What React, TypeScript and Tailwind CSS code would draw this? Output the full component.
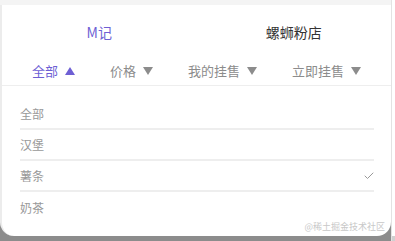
import { Check } from "lucide-react";

const filters = [
  { label: "全部", active: true },
  { label: "价格", active: false },
  { label: "我的挂售", active: false },
  { label: "立即挂售", active: false },
];

const options = [
  { label: "全部", checked: false },
  { label: "汉堡", checked: false },
  { label: "薯条", checked: true },
  { label: "奶茶", checked: false },
];

function Caret({ up, active }: { up: boolean; active: boolean }) {
  return (
    <svg width="10" height="8" viewBox="0 0 10 8" className="ml-[7px]">
      <polygon
        points={up ? "5,0 10,8 0,8" : "0,0 10,0 5,8"}
        fill={active ? "#6e5fd4" : "#8c8c8c"}
      />
    </svg>
  );
}

export default function App() {
  return (
    <div
      className="w-[395px] h-[241px] flex bg-white overflow-hidden"
      style={{ fontFamily: '"Noto Sans CJK SC", "Noto Sans", sans-serif' }}
    >
      <div className="w-[392px] h-full flex flex-col bg-[#8c8c8c] border-r border-[#e3e3e3]">
        <div className="h-[5px] bg-[#f4f4f4] shrink-0" />
        <div className="h-[231px] bg-white border-l-2 border-[#ececec] rounded-b-[14px] flex flex-col relative">
          <div className="flex h-[52px] items-center pt-[2px]">
            <div className="flex-1 text-center text-[14px] text-[#6e5fd4]">M记</div>
            <div className="flex-1 text-center text-[14px] text-[#333]">螺蛳粉店</div>
          </div>
          <div className="flex h-[29px] items-center justify-between px-[30px] border-b border-[#eeeeee]">
            {filters.map((f) => (
              <div key={f.label} className="flex items-center">
                <span className={`text-[13px] ${f.active ? "text-[#6e5fd4]" : "text-[#8c8c8c]"}`}>
                  {f.label}
                </span>
                <Caret up={f.active} active={f.active} />
              </div>
            ))}
          </div>
          <div className="flex flex-col pl-[18px] pr-[17px] pt-[13px]">
            {options.map((o, i) => (
              <div
                key={o.label}
                className={`h-[31px] flex items-center justify-between ${
                  i < options.length - 1 ? "border-b-2 border-[#eeeeee]" : ""
                }`}
              >
                <span className="text-[12px] text-[#999]">{o.label}</span>
                {o.checked && <Check size={12} strokeWidth={2} className="text-[#999] mr-[-1px]" />}
              </div>
            ))}
          </div>
          <span className="absolute right-[6px] bottom-[3px] text-[9px] text-[#c8c8c8]">@稀土掘金技术社区</span>
        </div>
      </div>
      <div className="flex-1 flex flex-col">
        <div className="flex-1 bg-white" />
        <div className="h-[5px] bg-[#d0d0d0]" />
      </div>
    </div>
  );
}
